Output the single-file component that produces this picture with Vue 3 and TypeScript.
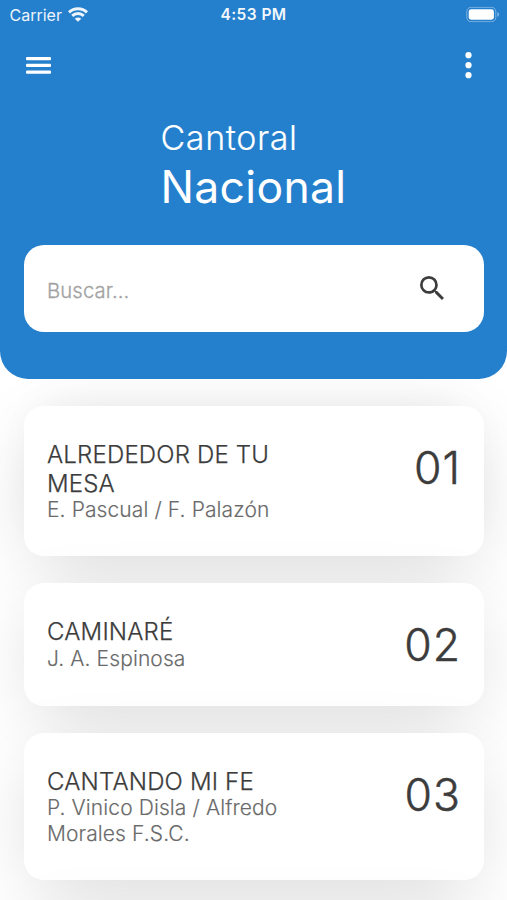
<script setup lang="ts">
interface Song {
  number: string
  title: string[]
  author: string[]
}

const songs: Song[] = [
  { number: '01', title: ['ALREDEDOR DE TU', 'MESA'], author: ['E. Pascual / F. Palazón'] },
  { number: '02', title: ['CAMINARÉ'], author: ['J. A. Espinosa'] },
  { number: '03', title: ['CANTANDO MI FE'], author: ['P. Vinico Disla / Alfredo', 'Morales F.S.C.'] },
]
</script>

<template>
  <main class="screen">
    <header class="header">
      <div class="status">
        <div class="carrier">
          <span>Carrier</span>
          <svg width="20" height="15" viewBox="0 0 20 15" fill="none" stroke="#fff" stroke-width="3">
            <path d="M1 5.3C6 .5 14 .5 19 5.3" />
            <path d="M4.2 8.9C7.6 5.7 12.4 5.7 15.8 8.9" />
            <path d="M10 14.8L6.7 11.7C8.6 10 11.4 10 13.3 11.7Z" fill="#fff" stroke="none" />
          </svg>
        </div>
        <div class="time">4:53 PM</div>
        <svg class="battery" width="34" height="16" viewBox="0 0 34 16">
          <rect x=".8" y=".8" width="29" height="14.4" rx="4.3" fill="none" stroke="#fff" stroke-opacity=".4" />
          <rect x="2.7" y="2.8" width="25.2" height="10.4" rx="2.4" fill="#fff" />
          <path d="M31.3 5.5Q33.2 6.2 33.2 8T31.3 10.5Z" fill="#fff" fill-opacity=".4" />
        </svg>
      </div>
      <nav class="nav">
        <svg width="25" height="18" viewBox="0 0 25 18" fill="#fff">
          <rect width="25" height="3.2" rx="1" y="1" />
          <rect width="25" height="3.2" rx="1" y="7.8" />
          <rect width="25" height="3.2" rx="1" y="14.5" />
        </svg>
        <svg width="7" height="28" viewBox="0 0 7 28" fill="#fff">
          <circle cx="3.5" cy="4.2" r="3.1" />
          <circle cx="3.5" cy="14.2" r="3.1" />
          <circle cx="3.5" cy="24.2" r="3.1" />
        </svg>
      </nav>
      <h1 class="heading">
        <span class="heading-top">Cantoral</span>
        <span class="heading-main">Nacional</span>
      </h1>
      <div class="search">
        <span class="placeholder">Buscar...</span>
        <svg width="24" height="24" viewBox="3 3 17.5 17.5" fill="#3c3c3c">
          <path d="M15.5 14h-.79l-.28-.27A6.471 6.471 0 0 0 16 9.5 6.5 6.5 0 1 0 9.5 16c1.61 0 3.09-.59 4.23-1.57l.27.28v.79l5 4.99L20.49 19l-4.99-5zm-6 0C7.01 14 5 11.99 5 9.5S7.01 5 9.5 5 14 7.01 14 9.5 11.99 14 9.5 14z" />
        </svg>
      </div>
    </header>
    <section class="list">
      <article v-for="song in songs" :key="song.number" class="card">
        <div class="text">
          <h2 class="title"><span v-for="line in song.title" :key="line">{{ line }}</span></h2>
          <p class="author"><span v-for="line in song.author" :key="line">{{ line }}</span></p>
        </div>
        <div class="number">{{ song.number }}</div>
      </article>
      <article class="card" aria-hidden="true"></article>
    </section>
  </main>
</template>

<style>
body { margin: 0; background: #fff; overflow: hidden; }
</style>

<style scoped>
.screen {
  width: 507px;
  height: 900px;
  overflow: hidden;
  background: #fff;
  color: #3c3c3c;
  font-family: Inter, "Liberation Sans", sans-serif;
}
.header {
  position: relative;
  z-index: 1;
  box-sizing: border-box;
  height: 379px;
  padding: 0 23.5px;
  border-radius: 0 0 28px 28px;
  background: #247fcd;
  color: #fff;
}
.status {
  display: grid;
  grid-template-columns: 1fr auto 1fr;
  align-items: center;
  height: 29px;
  margin: 0 -16px 0 -14px;
  font-size: 16px;
}
.carrier { display: flex; align-items: center; gap: 6px; opacity: .92; }
.time { font-weight: 600; font-size: 15.5px; letter-spacing: .45px; transform: translateX(-1px); opacity: .94; }
.battery { justify-self: end; transform: translateY(-.5px); }
.nav {
  display: flex;
  justify-content: space-between;
  align-items: center;
  height: 28px;
  margin-top: 22px;
  padding: 0 12px 0 2.5px;
}
.heading {
  display: flex;
  flex-direction: column;
  margin: 38px 0 0 137px;
  font-weight: 300;
}
.heading-top { font-size: 34px; line-height: 42px; letter-spacing: .6px; -webkit-text-stroke: .15px; }
.heading-main { font-size: 44.5px; line-height: 56px; font-weight: 400; letter-spacing: .3px; }
.search {
  display: flex;
  justify-content: space-between;
  align-items: center;
  box-sizing: border-box;
  height: 87px;
  margin-top: 30px;
  padding: 0 40px 1px 23.5px;
  border-radius: 20px;
  background: #fff;
}
.placeholder { color: #a3a3a3; font-size: 20.3px; font-weight: 300; letter-spacing: .1px; padding-top: 5px; -webkit-text-stroke: .3px; }
.list {
  display: flex;
  flex-direction: column;
  gap: 27px;
  padding: 27px 23.5px 0;
}
.card {
  display: flex;
  justify-content: space-between;
  box-sizing: border-box;
  min-height: 120px;
  padding: 35px 24px 33.5px 23.5px;
  border-radius: 20px;
  background: #fff;
  box-shadow: 0 18px 76px -12px rgba(0, 0, 0, .155);
}
.card:first-child {
  height: 150px;
  box-shadow: 0 18px 76px -12px rgba(0, 0, 0, .155), 0 -14px 46px -20px rgba(0, 0, 0, .08);
}
.title, .author { margin: 0; font-weight: 300; white-space: nowrap; -webkit-text-stroke: .25px; }
.title span, .author span { display: block; }
.title { font-size: 24px; line-height: 28.5px; letter-spacing: .18px; }
.author { margin-top: -1px; font-size: 21px; line-height: 25.5px; letter-spacing: .1px; color: #6a6a6a; -webkit-text-stroke: .15px; }
.number { font-size: 44.5px; line-height: 54px; font-weight: 300; letter-spacing: 1px; margin-right: -1.5px; -webkit-text-stroke: .5px; }
</style>
